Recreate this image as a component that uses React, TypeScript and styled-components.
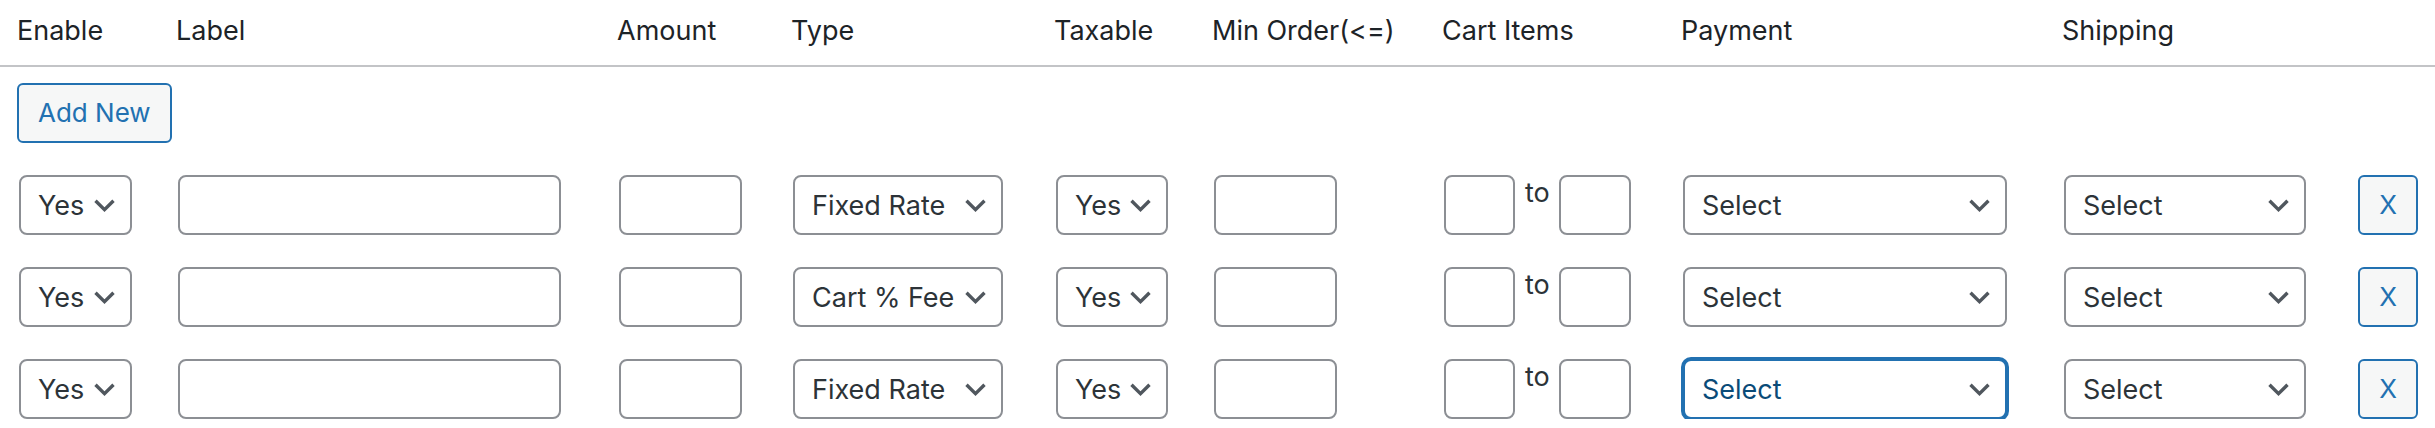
import React from "react";
import styled, { createGlobalStyle, css } from "styled-components";

const GlobalStyle = createGlobalStyle`
  html, body {
    margin: 0;
    padding: 0;
    background: #ffffff;
  }
  body {
    font-family: Inter, "Noto Sans", "Liberation Sans", sans-serif;
    color: #1d2327;
  }
`;

const COLUMNS = "159px 441px 174px 263px 158px 230px 239px 381px 294px 1fr";

const Page = styled.div`
  width: 2435px;
  font-size: 27px;
`;

const HeaderRow = styled.div`
  display: grid;
  grid-template-columns: ${COLUMNS};
  align-items: center;
  padding: 0 0 0 17px;
  border-bottom: 2px solid #c3c4c7;
  box-sizing: border-box;
  height: 67px;
`;

const HeaderCell = styled.div`
  font-size: 27px;
  line-height: 36px;
  color: #1d2327;
  padding-bottom: 4px;
  white-space: nowrap;
`;

const ActionBar = styled.div`
  padding: 16px 0 0 17px;
`;

const Button = styled.button<{ $square?: boolean }>`
  box-sizing: border-box;
  height: 60px;
  padding: 0 ${(p) => (p.$square ? "0" : "19px")};
  width: ${(p) => (p.$square ? "60px" : "auto")};
  border: 2px solid #2271b1;
  border-radius: 6px;
  background: #f6f7f7;
  color: #2271b1;
  font-family: inherit;
  font-size: 26px;
  line-height: 1;
  cursor: pointer;
  margin-left: ${(p) => (p.$square ? "2px" : "0")};
`;

const Rows = styled.div`
  display: flex;
  flex-direction: column;
  gap: 32px;
  padding: 32px 0 0 17px;
`;

const Row = styled.div`
  display: grid;
  grid-template-columns: ${COLUMNS};
  align-items: start;
  height: 60px;
`;

const Cell = styled.div`
  display: flex;
  align-items: flex-start;
`;

const controlBase = css`
  box-sizing: border-box;
  height: 60px;
  margin-left: 2px;
  border: 2px solid #8c8f94;
  border-radius: 8px;
  background: #ffffff;
`;

const TextInput = styled.div<{ $w: number }>`
  ${controlBase};
  width: ${(p) => p.$w}px;
`;

const SelectBox = styled.div<{ $w: number; $focused?: boolean }>`
  ${controlBase};
  width: ${(p) => p.$w}px;
  display: flex;
  align-items: center;
  justify-content: space-between;
  padding: 0 15px 0 17px;
  font-size: 27px;
  color: #2c3338;
  white-space: nowrap;
  ${(p) =>
    p.$focused &&
    css`
      border-color: #2271b1;
      box-shadow: 0 0 0 2px #2271b1;
      color: #0a4b78;
    `}
`;

const ToLabel = styled.span`
  font-size: 27px;
  line-height: 36px;
  color: #2c3338;
  margin: 0 7px 0 10px;
`;

const Chevron = () => (
  <svg width="21" height="13" viewBox="0 0 21 13" aria-hidden="true">
    <path
      d="M1.5 1.8 L10.5 10.6 L19.5 1.8"
      fill="none"
      stroke="#50575e"
      strokeWidth="3.4"
    />
  </svg>
);

const Select = ({
  value,
  w,
  focused,
}: {
  value: string;
  w: number;
  focused?: boolean;
}) => (
  <SelectBox $w={w} $focused={focused}>
    <span>{value}</span>
    <Chevron />
  </SelectBox>
);

const headers = [
  "Enable",
  "Label",
  "Amount",
  "Type",
  "Taxable",
  "Min Order(<=)",
  "Cart Items",
  "Payment",
  "Shipping",
  "",
];

const rows = [
  { type: "Fixed Rate", focused: false },
  { type: "Cart % Fee", focused: false },
  { type: "Fixed Rate", focused: true },
];

export default function App() {
  return (
    <Page>
      <GlobalStyle />
      <HeaderRow>
        {headers.map((h, i) => (
          <HeaderCell key={i}>{h}</HeaderCell>
        ))}
      </HeaderRow>
      <ActionBar>
        <Button>Add New</Button>
      </ActionBar>
      <Rows>
        {rows.map((r, i) => (
          <Row key={i}>
            <Cell>
              <Select value="Yes" w={113} />
            </Cell>
            <Cell>
              <TextInput $w={383} />
            </Cell>
            <Cell>
              <TextInput $w={123} />
            </Cell>
            <Cell>
              <Select value={r.type} w={210} />
            </Cell>
            <Cell>
              <Select value="Yes" w={112} />
            </Cell>
            <Cell>
              <TextInput $w={123} />
            </Cell>
            <Cell>
              <TextInput $w={71} />
              <ToLabel>to</ToLabel>
              <TextInput $w={72} />
            </Cell>
            <Cell>
              <Select value="Select" w={324} focused={r.focused} />
            </Cell>
            <Cell>
              <Select value="Select" w={242} />
            </Cell>
            <Cell>
              <Button $square>X</Button>
            </Cell>
          </Row>
        ))}
      </Rows>
    </Page>
  );
}
